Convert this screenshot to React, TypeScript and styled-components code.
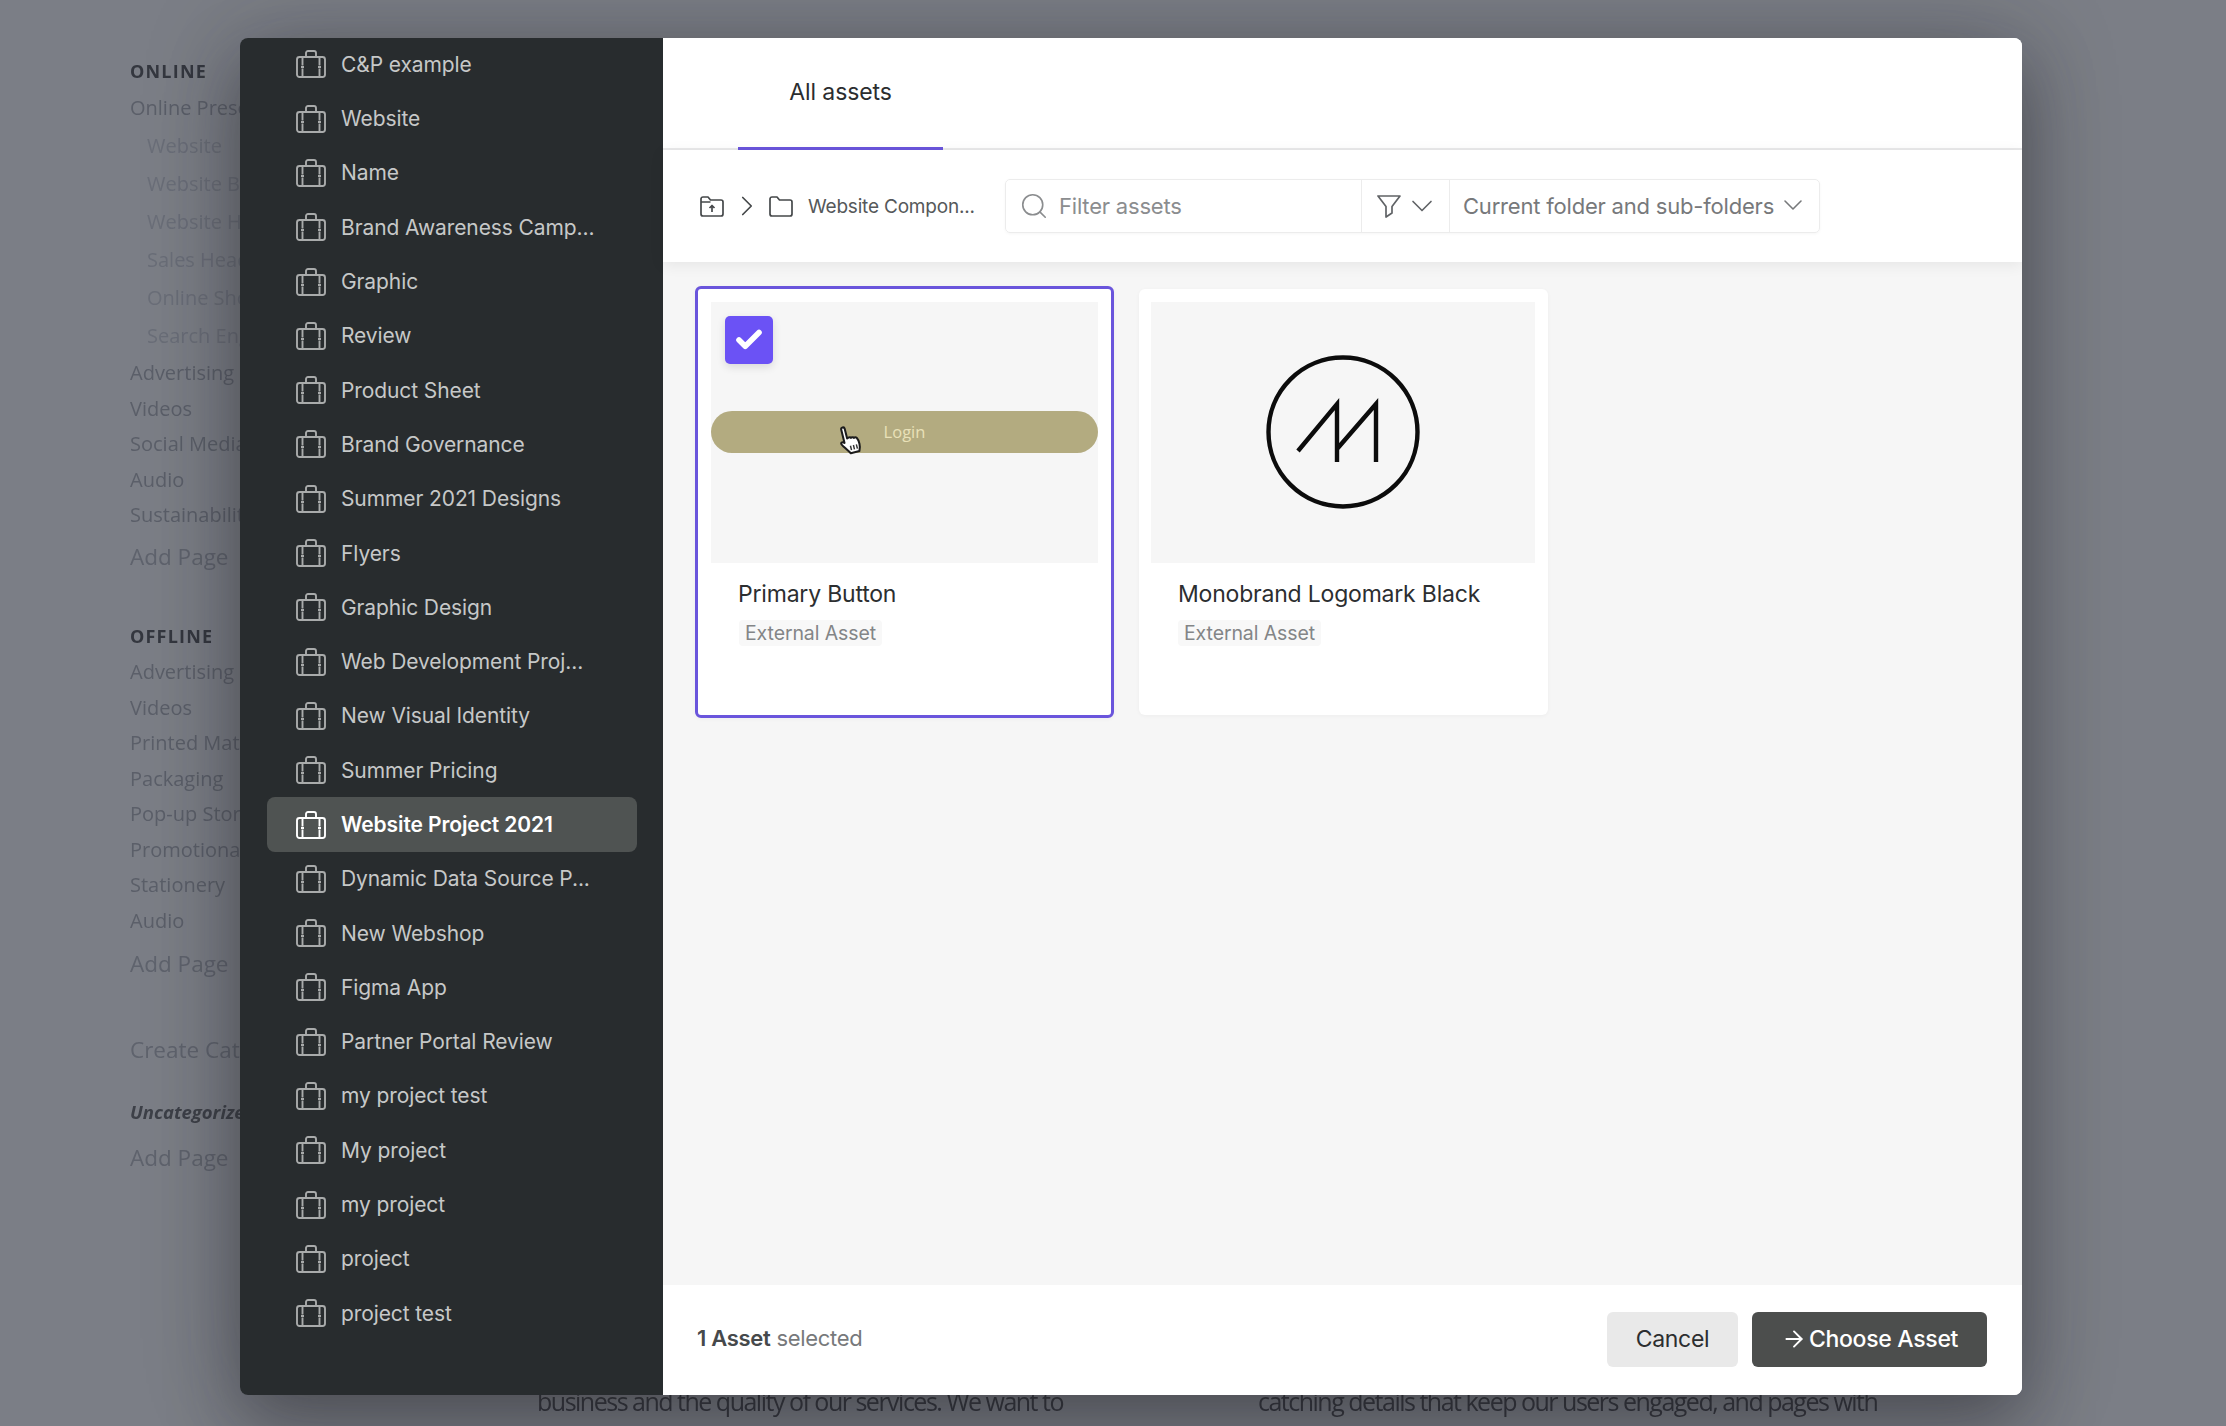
import React from 'react'
import styled, { createGlobalStyle } from 'styled-components'
import { Check, ChevronDown, ChevronRight, Search, ArrowRight } from 'lucide-react'

const GlobalStyle = createGlobalStyle`
  html, body {
    margin: 0;
    height: 100%;
    background: #7a7d86;
  }
  * {
    box-sizing: border-box;
  }
`

const Page = styled.div`
  position: relative;
  display: flex;
  width: 2226px;
  height: 1426px;
  overflow: hidden;
  background: #7b7e86;
  font-family: 'Open Sans', 'Liberation Sans', sans-serif;
`

const Nav = styled.nav`
  width: 537px;
  flex: none;
  padding: 58px 0 0 130px;
  filter: blur(0.7px);
`

const NavHeading = styled.div<{ $top?: number }>`
  margin-top: ${(p) => p.$top ?? 0}px;
  margin-bottom: 5px;
  height: 26px;
  line-height: 26px;
  font-size: 18px;
  font-weight: 700;
  letter-spacing: 1.2px;
  color: #34373f;
`

const NavItem = styled.div<{ $sub?: boolean; $h?: number }>`
  height: ${(p) => p.$h ?? 35.5}px;
  line-height: ${(p) => p.$h ?? 35.5}px;
  padding-left: ${(p) => (p.$sub ? 17 : 0)}px;
  font-size: 20px;
  white-space: nowrap;
  color: ${(p) => (p.$sub ? '#6a6e78' : '#5b5f69')};
`

const AddPage = styled.div<{ $top?: number }>`
  margin-top: ${(p) => p.$top ?? 6}px;
  height: 36px;
  line-height: 36px;
  font-size: 22.5px;
  white-space: nowrap;
  color: #5f636d;
`

const Uncategorized = styled.div`
  margin-top: 30px;
  height: 28px;
  line-height: 28px;
  font-size: 18.5px;
  font-weight: 700;
  font-style: italic;
  color: #3d4048;
`

const Article = styled.div`
  align-self: flex-end;
  display: flex;
  gap: 195px;
  height: 36px;
  margin-bottom: 7px;
  filter: blur(0.5px);
`

const ArticleText = styled.p`
  margin: 0;
  font-size: 25px;
  line-height: 36px;
  letter-spacing: -1.5px;
  white-space: nowrap;
  color: #33353d;
`

const Modal = styled.div`
  position: absolute;
  left: 240px;
  top: 38px;
  width: 1782px;
  height: 1357px;
  display: flex;
  border-radius: 8px;
  overflow: hidden;
  box-shadow: 0 30px 70px rgba(30, 30, 35, 0.42), 0 0 100px rgba(30, 30, 35, 0.22);
  font-family: 'Inter', 'Liberation Sans', sans-serif;
`

const Sidebar = styled.aside`
  width: 423px;
  flex: none;
  padding: 0 26px 0 27px;
  background: #282c2e;
`

const ProjectList = styled.div`
  margin-top: -0.8px;
`

const ProjectRow = styled.div<{ $active?: boolean }>`
  display: flex;
  align-items: center;
  gap: 15px;
  height: 54.3px;
  padding-left: 29px;
  border-radius: 8px;
  font-size: 21px;
  letter-spacing: -0.1px;
  white-space: nowrap;
  color: ${(p) => (p.$active ? '#fff' : '#c6c8c8')};
  background: ${(p) => (p.$active ? '#4f5352' : 'transparent')};
  font-weight: ${(p) => (p.$active ? 600 : 400)};

  svg {
    flex: none;
    color: ${(p) => (p.$active ? '#fff' : '#a9abab')};
  }
`

const Main = styled.main`
  flex: 1;
  display: flex;
  flex-direction: column;
  min-width: 0;
  background: #f6f6f6;
`

const Tabs = styled.div`
  height: 112px;
  flex: none;
  padding-left: 75px;
  background: #fff;
  border-bottom: 2px solid #e9e9ea;
`

const Tab = styled.div`
  width: 205px;
  height: 112px;
  display: flex;
  align-items: center;
  justify-content: center;
  padding-bottom: 1px;
  border-bottom: 3px solid #6a55dc;
  font-size: 23px;
  letter-spacing: -0.1px;
  color: #2b2d2f;
`

const Toolbar = styled.div`
  position: relative;
  height: 112px;
  flex: none;
  display: flex;
  align-items: center;
  padding-left: 37px;
  background: #fff;
  box-shadow: 0 3px 14px rgba(0, 0, 0, 0.07);
`

const Crumbs = styled.div`
  display: flex;
  align-items: center;
  width: 305px;
  flex: none;
  color: #45484a;
`

const CrumbChevron = styled(ChevronRight)`
  margin: 0 5px 0 6px;
`

const CrumbLabel = styled.span`
  margin-left: 15px;
  font-size: 19px;
  letter-spacing: -0.2px;
  white-space: nowrap;
  color: #55585a;
`

const FilterBox = styled.div`
  display: flex;
  align-items: stretch;
  width: 815px;
  height: 54px;
  border: 1px solid #ececec;
  border-radius: 5px;
  box-shadow: 0 1px 3px rgba(0, 0, 0, 0.04);
`

const SearchField = styled.div`
  width: 355px;
  display: flex;
  align-items: center;
  gap: 10px;
  padding-left: 13px;
  font-size: 22px;
  letter-spacing: -0.2px;
  color: #8b8d8f;
`

const FilterButton = styled.div`
  width: 89px;
  display: flex;
  align-items: center;
  gap: 3px;
  padding-left: 15px;
  border-left: 1px solid #ececec;
  border-right: 1px solid #ececec;
  color: #606366;
`

const ScopeSelect = styled.div`
  flex: 1;
  display: flex;
  align-items: center;
  gap: 3px;
  padding-left: 13px;
  font-size: 22px;
  letter-spacing: -0.2px;
  white-space: nowrap;
  color: #77797b;

  svg {
    margin-top: -2px;
  }
`

const Grid = styled.div`
  flex: 1;
  display: flex;
  align-items: flex-start;
  gap: 25px;
  padding: 24px 0 0 32px;
`

const Card = styled.div<{ $selected?: boolean }>`
  position: relative;
  flex: none;
  width: ${(p) => (p.$selected ? 419 : 409)}px;
  height: ${(p) => (p.$selected ? 432 : 426)}px;
  margin-top: ${(p) => (p.$selected ? 0 : 3)}px;
  padding: ${(p) => (p.$selected ? '13px 13px 0 13px' : '13px 13px 0 12px')};
  background: #fff;
  border-radius: 6px;
  border: ${(p) => (p.$selected ? '3px solid #6a55dc' : 'none')};
  box-shadow: 0 1px 4px rgba(0, 0, 0, 0.04);
`

const Preview = styled.div`
  position: relative;
  height: 261px;
  padding-bottom: 2px;
  display: flex;
  align-items: center;
  justify-content: center;
  background: #f6f6f6;
`

const CheckMark = styled.div`
  position: absolute;
  left: 14px;
  top: 14px;
  width: 48px;
  height: 48px;
  display: flex;
  align-items: center;
  justify-content: center;
  border-radius: 5px;
  color: #fff;
  background: #6b52f5;
  box-shadow: 0 3px 8px rgba(0, 0, 0, 0.12);
`

const LoginButton = styled.div`
  width: 100%;
  height: 42px;
  display: flex;
  align-items: center;
  justify-content: center;
  border-radius: 21px;
  background: #b3ab80;
  font-family: 'Open Sans', 'Liberation Sans', sans-serif;
  font-size: 16.5px;
  color: #e9e1b8;
`

const HandCursor = styled.svg`
  position: absolute;
  left: 124px;
  top: 121px;
`

const CardTitle = styled.div<{ $left: number }>`
  margin: 15px 0 0 ${(p) => p.$left}px;
  height: 32px;
  line-height: 32px;
  font-size: 23px;
  letter-spacing: -0.2px;
  white-space: nowrap;
  color: #2c2e30;
`

const Badge = styled.span<{ $left: number }>`
  display: inline-block;
  margin: 10px 0 0 ${(p) => p.$left}px;
  padding: 0 6px;
  height: 26px;
  line-height: 26px;
  border-radius: 4px;
  background: #f8f8f8;
  font-size: 19.5px;
  letter-spacing: -0.1px;
  color: #838587;
`

const Footer = styled.footer`
  height: 110px;
  flex: none;
  display: flex;
  align-items: center;
  justify-content: space-between;
  padding: 0 35px 2px 34px;
  background: #fff;
`

const Selection = styled.div`
  margin-bottom: 2px;
  font-size: 22px;
  letter-spacing: -0.3px;
  color: #77797b;

  b {
    font-weight: 600;
    color: #46494b;
  }
`

const Actions = styled.div`
  display: flex;
  gap: 14px;
`

const Button = styled.div<{ $primary?: boolean }>`
  height: 55px;
  display: flex;
  align-items: center;
  justify-content: center;
  gap: 2px;
  width: ${(p) => (p.$primary ? 235 : 131)}px;
  border-radius: 6px;
  font-size: 23px;
  letter-spacing: -0.3px;
  font-weight: ${(p) => (p.$primary ? 500 : 400)};
  color: ${(p) => (p.$primary ? '#fff' : '#2c2e30')};
  background: ${(p) => (p.$primary ? '#4c4e4d' : '#e9e9e9')};
`

const projects = [
  'C&P example',
  'Website',
  'Name',
  'Brand Awareness Camp...',
  'Graphic',
  'Review',
  'Product Sheet',
  'Brand Governance',
  'Summer 2021 Designs',
  'Flyers',
  'Graphic Design',
  'Web Development Proj...',
  'New Visual Identity',
  'Summer Pricing',
  'Website Project 2021',
  'Dynamic Data Source P...',
  'New Webshop',
  'Figma App',
  'Partner Portal Review',
  'my project test',
  'My project',
  'my project',
  'project',
  'project test',
]

const Briefcase = () => (
  <svg width="30" height="28" viewBox="0 0 30 28" fill="none" stroke="currentColor" strokeWidth="1.9">
    <rect x="1" y="7" width="28" height="20" rx="2.5" />
    <path d="M10 7V3a2 2 0 0 1 2-2h6a2 2 0 0 1 2 2v4" />
    <path d="M6.5 7v8.500M6.500 18.500V27M23.500 7v8.500M23.500 18.500V27" />
    <path d="M5 17h3M22 17h3" />
  </svg>
)

const FolderUp = () => (
  <svg width="24" height="21" viewBox="0 0 24 21" fill="none" stroke="currentColor" strokeWidth="1.7" strokeLinejoin="round">
    <path d="M1 18V3a2 2 0 0 1 2-2h5l2.500 3H21a2 2 0 0 1 2 2v12a2 2 0 0 1-2 2H3a2 2 0 0 1-2-2z" />
    <path d="M1 6h9.500" />
    <path d="M12 16V9.500M9.500 12L12 9.500l2.500 2.500" />
  </svg>
)

const Folder = () => (
  <svg width="24" height="21" viewBox="0 0 24 21" fill="none" stroke="currentColor" strokeWidth="1.7" strokeLinejoin="round">
    <path d="M1 18V3a2 2 0 0 1 2-2h5l2.500 3H21a2 2 0 0 1 2 2v12a2 2 0 0 1-2 2H3a2 2 0 0 1-2-2z" />
  </svg>
)

const FunnelIcon = () => (
  <svg width="24" height="24" viewBox="0 0 24 24" fill="none" stroke="currentColor" strokeWidth="1.7" strokeLinejoin="round">
    <path d="M1 2h22l-8 10.500V19l-6 4V12.500z" />
  </svg>
)

const Logomark = () => (
  <svg width="156" height="156" viewBox="0 0 156 156" fill="none" stroke="#0c0c0c" strokeWidth="4.4">
    <circle cx="78" cy="78" r="74.500" />
    <path d="M33 97L72 50V108M72 95L111 50V108" />
  </svg>
)

const Hand = () => (
  <HandCursor width="32" height="36" viewBox="0 0 28 32">
    <g transform="rotate(-14 14 16)">
      <path
        d="M8 4c0-2 3.200-2 3.200 0v9l1-.4c1-.3 1.900 0 2.300.7.7-.5 2.100-.4 2.600.6.9-.4 2-.2 2.600.8.5.9 1 3 1 5.500 0 3.200-.7 4.700-1.600 6.300H11.200c-1-1.800-2.500-3.800-4.500-6.800-.9-1.400-2.200-3-1.600-4 .6-1 2-.6 2.900.6z"
        fill="#fff"
        stroke="#1c1c1c"
        strokeWidth="1.8"
        strokeLinejoin="round"
      />
      <path d="M12.500 20v4M15.200 20v4M17.900 20v4" stroke="#333" strokeWidth="1.3" />
    </g>
  </HandCursor>
)

export default function App() {
  return (
    <Page>
      <GlobalStyle />
      <Nav>
        <NavHeading>ONLINE</NavHeading>
        <NavItem $h={38}>Online Presence</NavItem>
        <NavItem $sub $h={38}>Website</NavItem>
        <NavItem $sub $h={38}>Website Banners</NavItem>
        <NavItem $sub $h={38}>Website Headers</NavItem>
        <NavItem $sub $h={38}>Sales Header</NavItem>
        <NavItem $sub $h={38}>Online Shop</NavItem>
        <NavItem $sub $h={38}>Search Engine</NavItem>
        <NavItem>Advertising</NavItem>
        <NavItem>Videos</NavItem>
        <NavItem>Social Media</NavItem>
        <NavItem>Audio</NavItem>
        <NavItem>Sustainability</NavItem>
        <AddPage>Add Page</AddPage>
        <NavHeading $top={48}>OFFLINE</NavHeading>
        <NavItem $h={36}>Advertising</NavItem>
        <NavItem>Videos</NavItem>
        <NavItem>Printed Material</NavItem>
        <NavItem>Packaging</NavItem>
        <NavItem>Pop-up Stores</NavItem>
        <NavItem>Promotional</NavItem>
        <NavItem>Stationery</NavItem>
        <NavItem>Audio</NavItem>
        <AddPage $top={8}>Add Page</AddPage>
        <AddPage $top={50}>Create Category</AddPage>
        <Uncategorized>Uncategorized</Uncategorized>
        <AddPage $top={14}>Add Page</AddPage>
      </Nav>
      <Article>
        <ArticleText>business and the quality of our services. We want to</ArticleText>
        <ArticleText>catching details that keep our users engaged, and pages with</ArticleText>
      </Article>

      <Modal>
        <Sidebar>
          <ProjectList>
            {projects.map((name) => (
              <ProjectRow key={name} $active={name === 'Website Project 2021'}>
                <Briefcase />
                {name}
              </ProjectRow>
            ))}
          </ProjectList>
        </Sidebar>
        <Main>
          <Tabs>
            <Tab>All assets</Tab>
          </Tabs>
          <Toolbar>
            <Crumbs>
              <FolderUp />
              <CrumbChevron size={34} strokeWidth={1.2} />
              <Folder />
              <CrumbLabel>Website Compon...</CrumbLabel>
            </Crumbs>
            <FilterBox>
              <SearchField>
                <Search size={30} strokeWidth={1.3} />
                Filter assets
              </SearchField>
              <FilterButton>
                <FunnelIcon />
                <ChevronDown size={36} strokeWidth={1.1} />
              </FilterButton>
              <ScopeSelect>
                Current folder and sub-folders
                <ChevronDown size={32} strokeWidth={1.2} />
              </ScopeSelect>
            </FilterBox>
          </Toolbar>
          <Grid>
            <Card $selected>
              <Preview>
                <LoginButton>Login</LoginButton>
                <CheckMark>
                  <Check size={30} strokeWidth={4.5} />
                </CheckMark>
                <Hand />
              </Preview>
              <CardTitle $left={27}>Primary Button</CardTitle>
              <Badge $left={28}>External Asset</Badge>
            </Card>
            <Card>
              <Preview>
                <Logomark />
              </Preview>
              <CardTitle $left={27}>Monobrand Logomark Black</CardTitle>
              <Badge $left={27}>External Asset</Badge>
            </Card>
          </Grid>
          <Footer>
            <Selection>
              <b>1 Asset</b> selected
            </Selection>
            <Actions>
              <Button>Cancel</Button>
              <Button $primary>
                <ArrowRight size={26} strokeWidth={1.8} />
                Choose Asset
              </Button>
            </Actions>
          </Footer>
        </Main>
      </Modal>
    </Page>
  )
}
